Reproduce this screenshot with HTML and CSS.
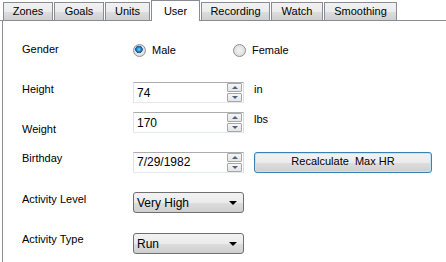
FILE: index.html
```html
<!DOCTYPE html>
<html lang="en">

<head>
  <meta charset="UTF-8">
  <meta name="viewport" content="width=device-width, initial-scale=1.0">
  <title>User</title>
  <link rel="stylesheet" href="styles.css">
</head>

<body>
  <!-- tab strip -->
  <div class="tabs">
    <div class="tab tab-zones">Zones</div>
    <div class="tab tab-goals">Goals</div>
    <div class="tab tab-units">Units</div>
    <div class="tab tab-user active">User</div>
    <div class="tab tab-recording">Recording</div>
    <div class="tab tab-watch">Watch</div>
    <div class="tab tab-smoothing">Smoothing</div>
  </div>

  <!-- user page -->
  <div class="panel">
    <div class="row row-gender">
      <div class="label">Gender</div>
      <div class="radio"><span class="dot on"></span>Male</div>
      <div class="radio"><span class="dot"></span>Female</div>
    </div>

    <div class="row row-height">
      <div class="label">Height</div>
      <div class="spin">
        <span class="value">74</span>
        <span class="spin-btns">
          <span class="spin-btn up"></span>
          <span class="spin-btn down"></span>
        </span>
      </div>
      <div class="unit">in</div>
    </div>

    <div class="row row-weight">
      <div class="label label-low">Weight</div>
      <div class="spin">
        <span class="value">170</span>
        <span class="spin-btns">
          <span class="spin-btn up"></span>
          <span class="spin-btn down"></span>
        </span>
      </div>
      <div class="unit">lbs</div>
    </div>

    <div class="row row-birthday">
      <div class="label label-top">Birthday</div>
      <div class="spin">
        <span class="value">7/29/1982</span>
        <span class="spin-btns">
          <span class="spin-btn up"></span>
          <span class="spin-btn down"></span>
        </span>
      </div>
      <div class="button">Recalculate  Max HR</div>
    </div>

    <div class="row row-level">
      <div class="label">Activity Level</div>
      <div class="combo"><span class="value">Very High</span><span class="caret"></span></div>
    </div>

    <div class="row row-type">
      <div class="label label-top">Activity Type</div>
      <div class="combo"><span class="value">Run</span><span class="caret"></span></div>
    </div>
  </div>
</body>

</html>
```

FILE: styles.css
```css
body,
html {
  width: 100%;
  height: 100%;
  margin: 0;
  background: #fff;
  overflow: hidden;
}

body {
  font-family: "Liberation Sans", Arial, sans-serif;
  font-size: 11px;
  color: #000;
}

/* tabs */
.tabs {
  display: flex;
  align-items: flex-end;
  gap: 1px;
  height: 20px;
  padding-left: 3px;
  border-bottom: 1px solid #898c95;
}

.tab {
  box-sizing: border-box;
  height: 18px;
  line-height: 17px;
  text-align: center;
  border: 1px solid #898c95;
  border-bottom: none;
  background: linear-gradient(#f2f2f2, #ebebeb 50%, #dddddd 51%, #cfcfcf);
}

.tab.active {
  height: 21px;
  line-height: 21px;
  margin-bottom: -1px;
  background: #fff;
}

.tab-zones { width: 50px; }
.tab-goals { width: 50px; }
.tab-units { width: 45px; }
.tab-user { width: 49px; }
.tab-recording { width: 69px; }
.tab-watch { width: 52px; }
.tab-smoothing { width: 73px; }

/* page */
.panel {
  height: 241px;
  margin-left: 2px;
  padding: 22px 0 0 19px;
  border-left: 1px solid #898c95;
  box-sizing: border-box;
}

.row {
  display: flex;
  align-items: flex-start;
  height: 21px;
  line-height: 13px;
}

.row-gender { height: 14px; }
.row-height { margin-top: 25px; }
.row-weight { margin-top: 9px; }
.row-birthday { margin-top: 19px; }
.row-level { margin-top: 19px; }
.row-type { margin-top: 20px; }

.label {
  width: 111px;
  flex: none;
  padding-top: 1px;
}

.row-gender .label { padding-top: 0; }
.label-low { padding-top: 11px; }
.label-top { padding-top: 0; }

/* radios */
.radio {
  display: flex;
  align-items: center;
  gap: 6px;
  width: 100px;
  height: 14px;
}

.dot {
  width: 11px;
  height: 11px;
  border-radius: 50%;
  border: 1px solid #8f9093;
  background: radial-gradient(circle at 50% 50%, #f4f4f4, #d4d4d4);
  box-sizing: content-box;
}

.dot.on {
  background:
    radial-gradient(circle at 45% 40%, #8fd3f6 0, #1f8fd0 2px, #1a4f8c 3.5px, transparent 4px),
    radial-gradient(circle at 50% 50%, #f4f4f4, #d4d4d4);
}

/* spin boxes */
.spin {
  display: flex;
  align-items: center;
  justify-content: space-between;
  box-sizing: border-box;
  width: 111px;
  height: 21px;
  padding: 1px 1px 1px 3px;
  border: 1px solid #abadb3;
  border-left-color: #e2e3ea;
  border-bottom-color: #e3e9ef;
  border-right-color: #dbdfe6;
  font-size: 12px;
}

.row-height .spin .value,
.row-weight .spin .value { padding-top: 2px; }

.spin-btns {
  display: flex;
  flex-direction: column;
  gap: 1px;
  width: 15px;
  height: 19px;
}

.spin-btn {
  position: relative;
  flex: 1;
  border: 1px solid #a7a7a7;
  border-radius: 1px;
  background: linear-gradient(#f6f6f6, #e4e4e4);
}

.spin-btn::after {
  content: "";
  position: absolute;
  left: 50%;
  top: 50%;
  margin: -2px 0 0 -3px;
  border-left: 3px solid transparent;
  border-right: 3px solid transparent;
}

.spin-btn.up::after { border-bottom: 3px solid #4d6185; }
.spin-btn.down::after { border-top: 3px solid #4d6185; }

.unit {
  margin-left: 10px;
  padding-top: 1px;
}

/* button */
.button {
  box-sizing: border-box;
  width: 178px;
  height: 21px;
  margin-left: 10px;
  line-height: 17px;
  text-align: center;
  white-space: pre;
  border: 1px solid #3c7fb1;
  border-radius: 3px;
  box-shadow: inset 0 0 0 1px #bfe6f8;
  background: linear-gradient(#f2f2f2, #ebebeb 50%, #dddddd 51%, #cfcfcf);
}

/* combo boxes */
.combo {
  display: flex;
  align-items: center;
  justify-content: space-between;
  box-sizing: border-box;
  width: 111px;
  height: 21px;
  padding: 0 6px 0 3px;
  border: 1px solid #707070;
  border-radius: 3px;
  background: linear-gradient(#f2f2f2, #ebebeb 50%, #dddddd 51%, #cfcfcf);
  font-size: 12px;
}

.combo .value { padding-top: 2px; }

.caret {
  border-left: 4px solid transparent;
  border-right: 4px solid transparent;
  border-top: 4px solid #000;
}
```
